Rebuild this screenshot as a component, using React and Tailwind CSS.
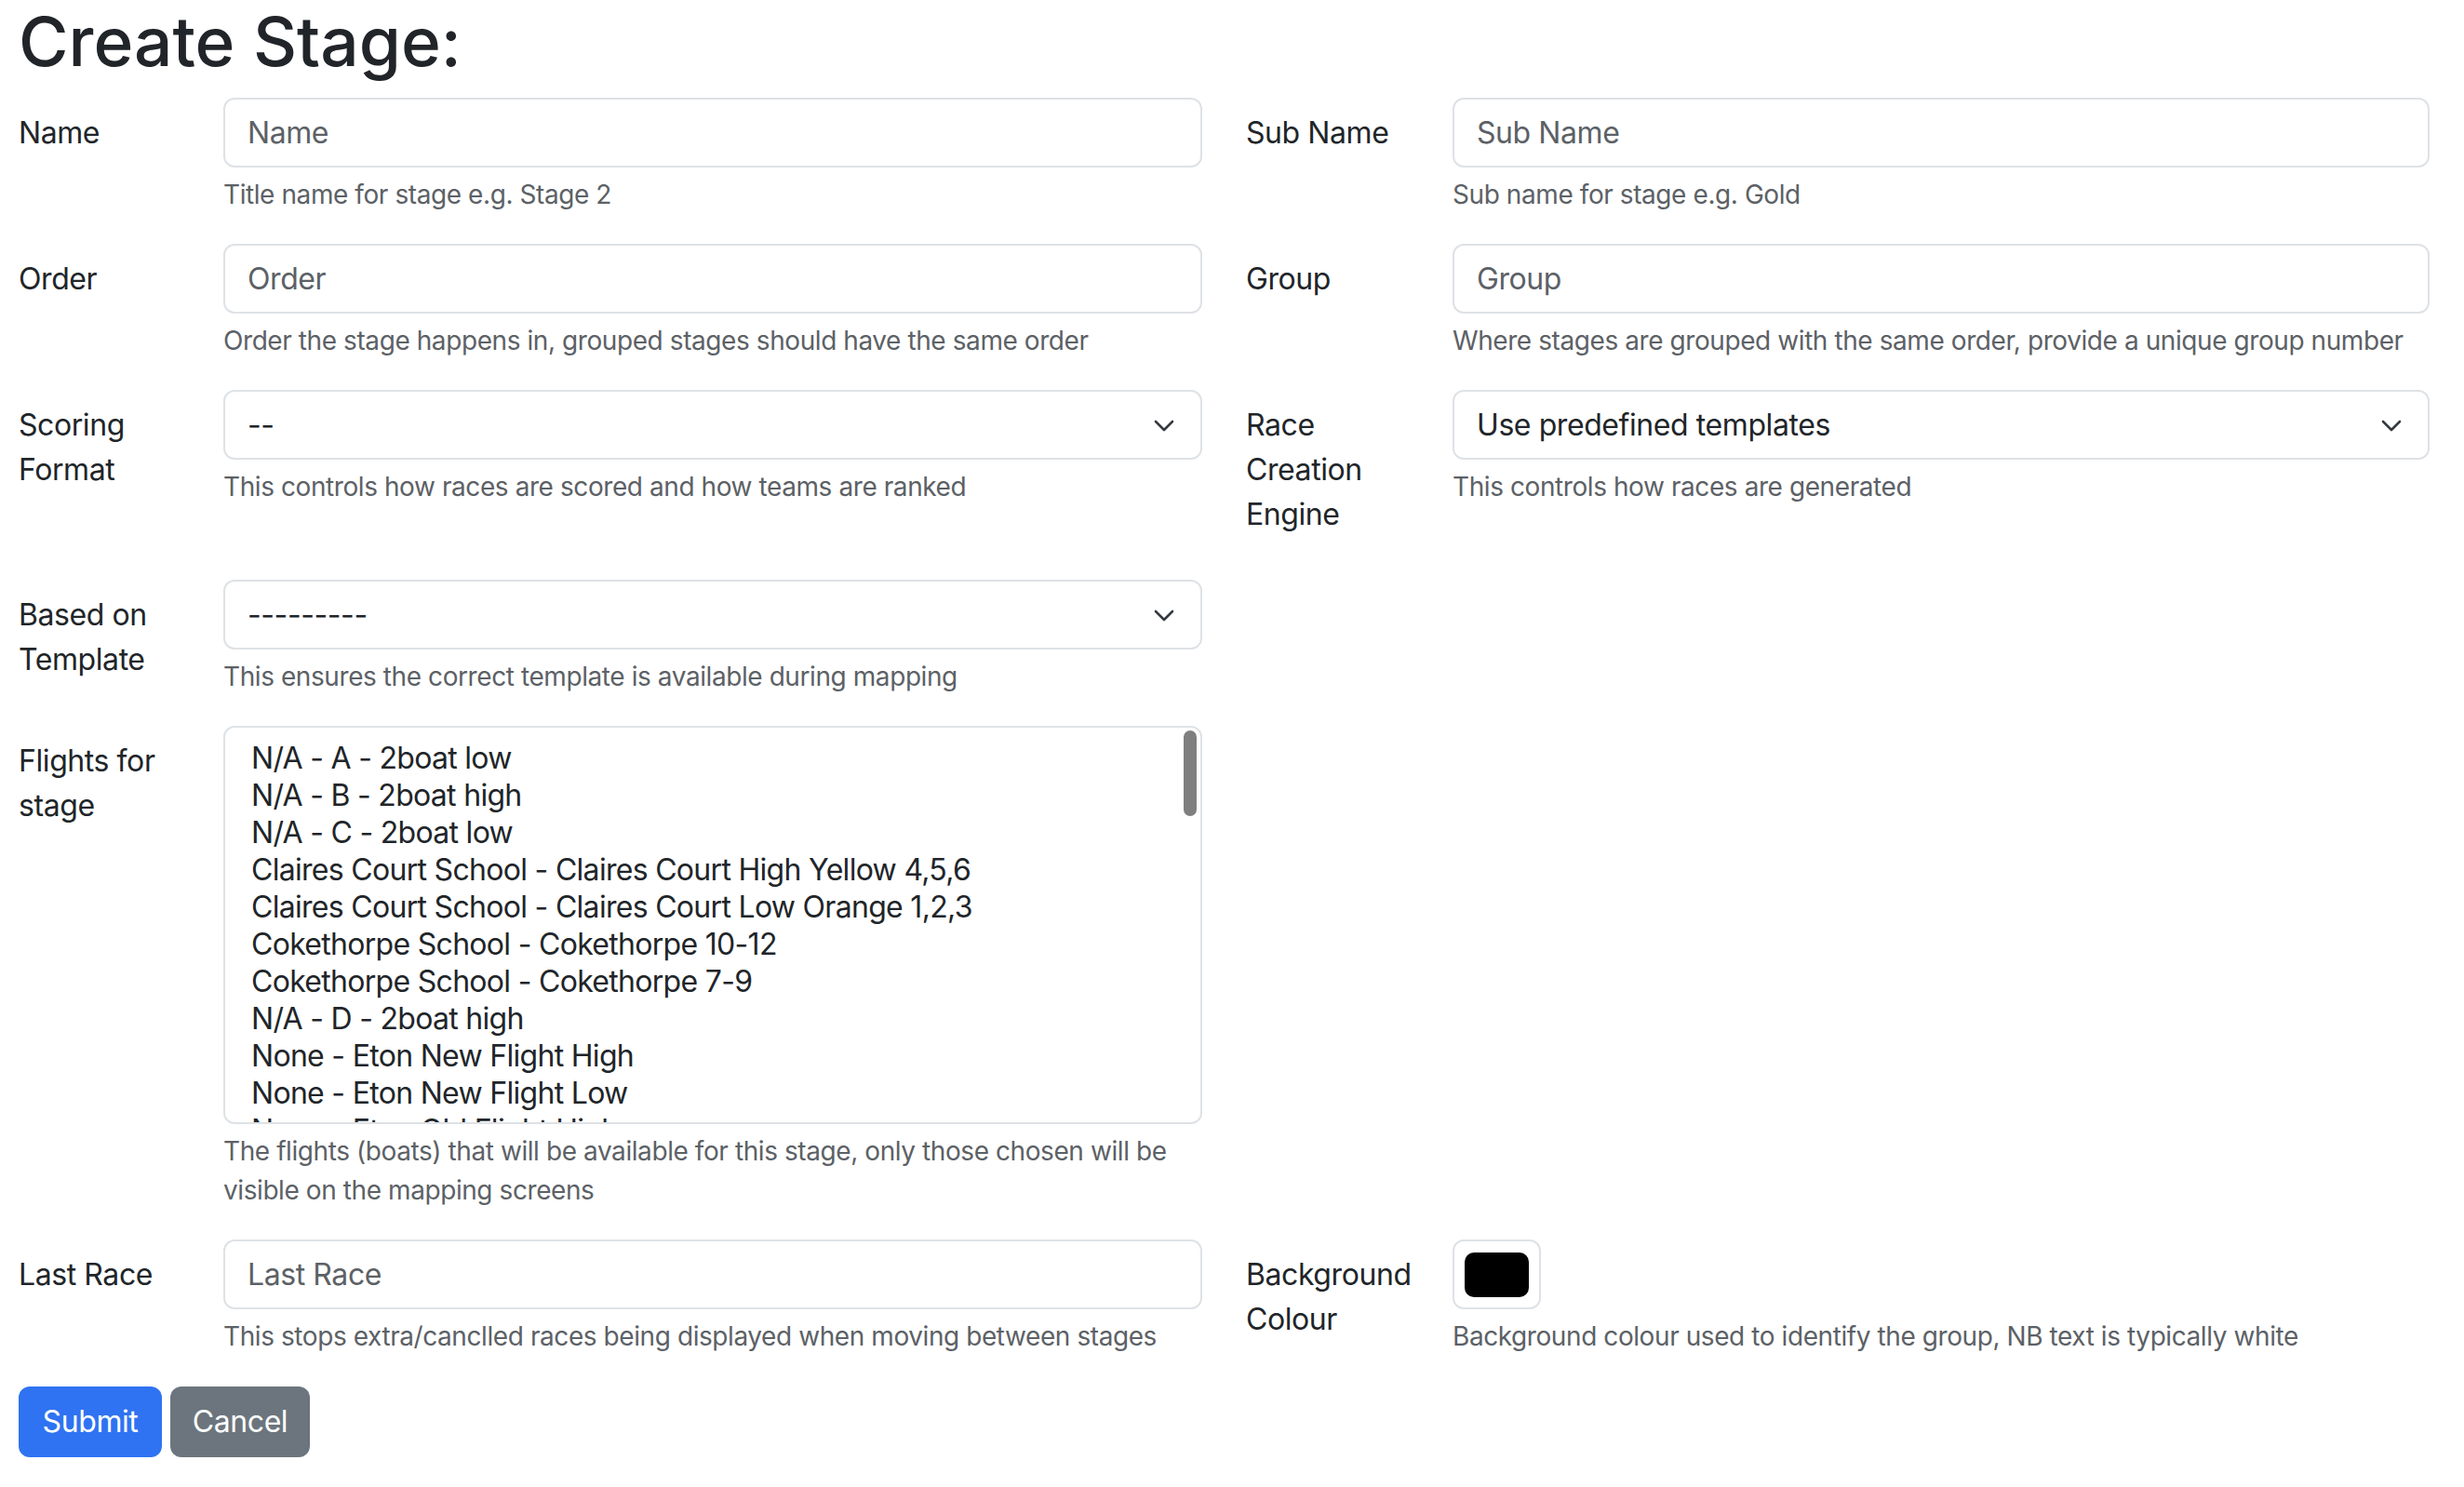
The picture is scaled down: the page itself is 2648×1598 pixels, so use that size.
const FLIGHTS = [
  "N/A - A - 2boat low",
  "N/A - B - 2boat high",
  "N/A - C - 2boat low",
  "Claires Court School - Claires Court High Yellow 4,5,6",
  "Claires Court School - Claires Court Low Orange 1,2,3",
  "Cokethorpe School - Cokethorpe 10-12",
  "Cokethorpe School - Cokethorpe 7-9",
  "N/A - D - 2boat high",
  "None - Eton New Flight High",
  "None - Eton New Flight Low",
  "None - Eton Old Flight High",
  "None - Eton Old Flight Low",
];

function Field({ label, right, help, children }) {
  return (
    <div className="flex mb-[32px]">
      <label
        className={`${right ? "w-[222px]" : "w-[220px]"} shrink-0 pt-[14px] pb-[14px] pr-[30px] leading-[48px] text-[#212529]`}
      >
        {label}
      </label>
      <div className="flex-1 min-w-0">
        {children}
        {help && <p className="mt-[8px] text-[28px] leading-[42px] text-[#5c6166]">{help}</p>}
      </div>
    </div>
  );
}

function TextInput({ placeholder }) {
  return (
    <input
      placeholder={placeholder}
      className="block h-[75px] w-full rounded-[12px] border-2 border-[#dee2e6] bg-white px-[24px] text-[32px] text-[#212529] outline-none placeholder:text-[#5c6166]"
    />
  );
}

function Select({ value }) {
  return (
    <div className="flex h-[75px] w-full items-center justify-between rounded-[12px] border-2 border-[#dee2e6] bg-white pl-[24px] pr-[27px] text-[#212529]">
      <span>{value}</span>
      <svg width="24" height="16" viewBox="0 0 24 16" fill="none">
        <polyline points="3,4 12,13 21,4" stroke="#343a40" strokeWidth="2.6" strokeLinecap="round" strokeLinejoin="round" />
      </svg>
    </div>
  );
}

export default function App() {
  return (
    <div className="min-h-screen bg-white pl-[20px] pr-[37px] font-['Inter',sans-serif] text-[32px] leading-[48px] tracking-[-0.42px] text-[#212529]">
      <h1 className="pt-[3px] mb-[18px] text-[73px] leading-[84px] font-medium tracking-normal text-[#212529]">Create Stage:</h1>

      <div className="grid grid-cols-2 gap-x-[47px]">
        <Field label="Name" help="Title name for stage e.g. Stage 2">
          <TextInput placeholder="Name" />
        </Field>
        <Field right label="Sub Name" help="Sub name for stage e.g. Gold">
          <TextInput placeholder="Sub Name" />
        </Field>

        <Field label="Order" help="Order the stage happens in, grouped stages should have the same order">
          <TextInput placeholder="Order" />
        </Field>
        <Field right label="Group" help="Where stages are grouped with the same order, provide a unique group number">
          <TextInput placeholder="Group" />
        </Field>

        <Field label="Scoring Format" help="This controls how races are scored and how teams are ranked">
          <Select value="--" />
        </Field>
        <Field right label="Race Creation Engine" help="This controls how races are generated">
          <Select value="Use predefined templates" />
        </Field>

        <Field label="Based on Template" help="This ensures the correct template is available during mapping">
          <Select value="---------" />
        </Field>
        <div />

        <Field
          label="Flights for stage"
          help="The flights (boats) that will be available for this stage, only those chosen will be visible on the mapping screens"
        >
          <div className="relative h-[428px] overflow-hidden rounded-[12px] border-2 border-[#dee2e6] bg-white pt-[13px] pl-[28px] tracking-[-0.7px]">
            {FLIGHTS.map((f) => (
              <div key={f} className="h-[40px] leading-[40px] whitespace-nowrap text-[#212529]">
                {f}
              </div>
            ))}
            <div className="absolute right-[4px] top-[3px] h-[92px] w-[14px] rounded-full bg-[#7f7f7f]" />
          </div>
        </Field>
        <div />

        <Field label="Last Race" help="This stops extra/canclled races being displayed when moving between stages">
          <TextInput placeholder="Last Race" />
        </Field>
        <Field right label="Background Colour" help="Background colour used to identify the group, NB text is typically white">
          <div className="flex h-[75px] w-[95px] items-center justify-center rounded-[12px] border-2 border-[#dee2e6] bg-white">
            <div className="h-[48px] w-[69px] rounded-[10px] bg-black" />
          </div>
        </Field>
      </div>

      <div className="mt-[1px] flex gap-[9px]">
        <button className="h-[76px] w-[154px] rounded-[12px] bg-[#2f73f2] text-white">Submit</button>
        <button className="h-[76px] w-[150px] rounded-[12px] bg-[#6c757d] text-white">Cancel</button>
      </div>
    </div>
  );
}
